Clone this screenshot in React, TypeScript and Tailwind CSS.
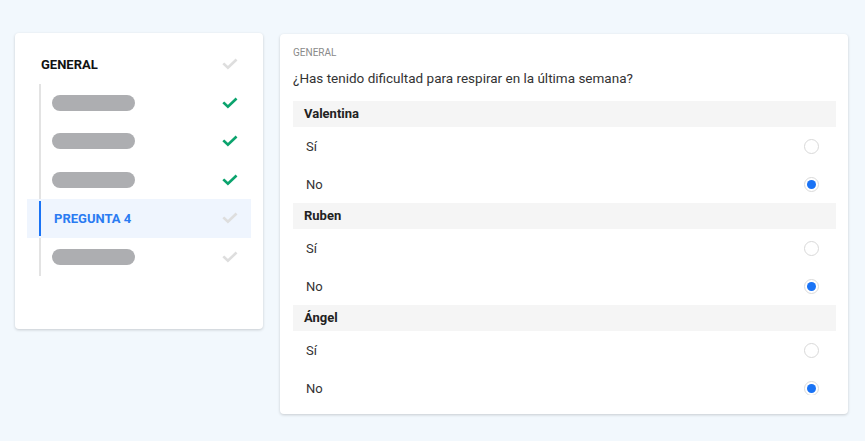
import React from 'react';

// Sidebar steps for the questionnaire
interface Step {
  label?: string;
  done: boolean;
  active?: boolean;
}

const steps: Step[] = [
  { done: true },
  { done: true },
  { done: true },
  { label: 'PREGUNTA 4', done: false, active: true },
  { done: false },
];

const people = [
  { name: 'Valentina', answer: 'No' },
  { name: 'Ruben', answer: 'No' },
  { name: 'Ángel', answer: 'No' },
];

const Check = ({ done }: { done: boolean }) => (
  <svg width="16" height="16" viewBox="0 0 16 16" className={done ? 'text-[#0ba36d]' : 'text-[#dedede]'}>
    <polyline
      points="2.2,8.3 5.9,11.8 13.6,4.4"
      fill="none"
      stroke="currentColor"
      strokeWidth="2.6"
      strokeLinecap="square"
    />
  </svg>
);

const Radio = ({ checked }: { checked: boolean }) =>
  checked ? (
    <span className="flex h-[15px] w-[15px] items-center justify-center rounded-full border-[1.5px] border-[#dadada] bg-white">
      <span className="h-[9px] w-[9px] rounded-full bg-[#1a73f5]" />
    </span>
  ) : (
    <span className="h-[15px] w-[15px] rounded-full border-[1.5px] border-[#d9d9d9] bg-white" />
  );

const Sidebar = () => (
  <div className="w-[248px] shrink-0 rounded bg-white px-3 pt-3 pb-[53px] shadow-[0_1px_3px_rgba(0,0,0,0.18)]">
    <div className="flex h-[38.5px] items-center justify-between pl-[14px] pr-[13px]">
      <span className="text-[13px] font-bold text-[#111]">GENERAL</span>
      <Check done={false} />
    </div>
    <div className="relative">
      {/* vertical rail */}
      <div className="absolute top-0 bottom-0 left-[12px] w-[2px] bg-[#e3e3e3]" />
      {steps.map((step, i) => (
        <div
          key={i}
          className={`relative flex h-[38.5px] items-center justify-between pr-[13px] ${step.active ? 'bg-[#eff5fe]' : ''}`}
        >
          {step.active && <div className="absolute top-[2px] bottom-[2px] left-[12px] w-[2px] bg-[#1a73f5]" />}
          {step.label ? (
            <span className="pl-[27px] text-[13px] font-bold text-[#2a7bf2]">{step.label}</span>
          ) : (
            <span className="ml-[25px] h-[16px] w-[83px] rounded-full bg-[#adaeb1]" />
          )}
          <Check done={step.done} />
        </div>
      ))}
    </div>
  </div>
);

const Question = () => (
  <div className="flex h-[380px] flex-1 flex-col rounded bg-white shadow-[0_1px_3px_rgba(0,0,0,0.18)]">
    <div className="h-[361px] overflow-hidden px-[13px] pt-[12px]">
      <div className="text-[10px] leading-[14px] text-[#8a8a8a]">GENERAL</div>
      <div className="mt-[8px] text-[13.5px] leading-[20px] text-[#333]">
        ¿Has tenido dificultad para respirar en la última semana?
      </div>
      <div className="mt-[13px] mr-[-1px]">
        {people.map((p) => (
          <div key={p.name}>
            <div className="flex h-[26px] items-center bg-[#f5f5f5] pl-[11px] text-[13px] font-bold text-[#222]">
              {p.name}
            </div>
            {['Sí', 'No'].map((opt) => (
              <div key={opt} className="flex h-[38px] items-center justify-between pl-[13px] pr-[17px] text-[13px] text-[#333]">
                <span className="leading-none">{opt}</span>
                <Radio checked={opt === p.answer} />
              </div>
            ))}
          </div>
        ))}
      </div>
    </div>
  </div>
);

export default function App() {
  return (
    <div className="min-h-[441px] w-full bg-[#f2f8fd] font-['Roboto',sans-serif]">
      <div className="flex items-start gap-[17px] pt-[33px] pl-[15px] pr-[17px]">
        <Sidebar />
        <div className="mt-px flex flex-1">
          <Question />
        </div>
      </div>
    </div>
  );
}
